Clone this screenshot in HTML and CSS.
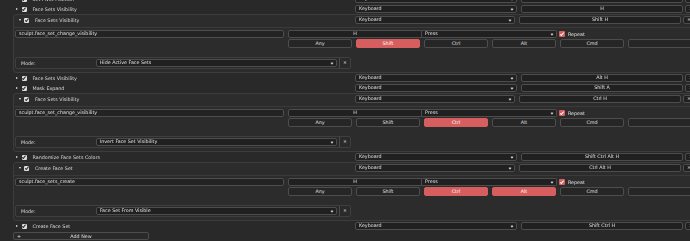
FILE: index.html
```html
<!DOCTYPE html>
<html>
<head>
<meta charset="utf-8">
<link rel="stylesheet" href="styles.css">
</head>
<body>
<div class="page">

  <div class="row">
    <div class="lead"><span class="tri"></span><span class="chk"></span><span class="name">Set Pivot Position</span></div>
    <div class="field dd">Keyboard<span class="arrow"></span></div>
    <div class="field key">Alt O</div>
    <div class="field xb">×</div>
  </div>

  <div class="row">
    <div class="lead"><span class="tri"></span><span class="chk"></span><span class="name">Face Sets Visibility</span></div>
    <div class="field dd">Keyboard<span class="arrow"></span></div>
    <div class="field key">H</div>
    <div class="field xb">×</div>
  </div>

  <div class="box">
    <div class="head">
      <div class="lead"><span class="tri open"></span><span class="chk"></span><span class="name">Face Sets Visibility</span></div>
      <div class="field dd">Keyboard<span class="arrow"></span></div>
      <div class="field key">Shift H</div>
      <div class="field xb">×</div>
    </div>
    <div class="sep"></div>
    <div class="line1">
      <div class="field op">sculpt.face_set_change_visibility</div>
      <div class="field hk">H</div>
      <div class="field press">Press<span class="arrow"></span></div>
      <span class="rchk"></span><span class="rtext">Repeat</span>
    </div>
    <div class="mods">
      <div class="mod">Any</div>
      <div class="mod on">Shift</div>
      <div class="mod">Ctrl</div>
      <div class="mod">Alt</div>
      <div class="mod">Cmd</div>
      <div class="mod"></div>
    </div>
    <div class="mode">
      <div class="mlabel">Mode:</div>
      <div class="field mdd">Hide Active Face Sets<span class="arrow"></span></div>
      <div class="mx">×</div>
    </div>
  </div>

  <div class="row">
    <div class="lead"><span class="tri"></span><span class="chk"></span><span class="name">Face Sets Visibility</span></div>
    <div class="field dd">Keyboard<span class="arrow"></span></div>
    <div class="field key">Alt H</div>
    <div class="field xb">×</div>
  </div>

  <div class="row">
    <div class="lead"><span class="tri"></span><span class="chk"></span><span class="name">Mask Expand</span></div>
    <div class="field dd">Keyboard<span class="arrow"></span></div>
    <div class="field key">Shift A</div>
    <div class="field xb">×</div>
  </div>

  <div class="box">
    <div class="head">
      <div class="lead"><span class="tri open"></span><span class="chk"></span><span class="name">Face Sets Visibility</span></div>
      <div class="field dd">Keyboard<span class="arrow"></span></div>
      <div class="field key">Ctrl H</div>
      <div class="field xb">×</div>
    </div>
    <div class="sep"></div>
    <div class="line1">
      <div class="field op">sculpt.face_set_change_visibility</div>
      <div class="field hk">H</div>
      <div class="field press">Press<span class="arrow"></span></div>
      <span class="rchk"></span><span class="rtext">Repeat</span>
    </div>
    <div class="mods">
      <div class="mod">Any</div>
      <div class="mod">Shift</div>
      <div class="mod on">Ctrl</div>
      <div class="mod">Alt</div>
      <div class="mod">Cmd</div>
      <div class="mod"></div>
    </div>
    <div class="mode">
      <div class="mlabel">Mode:</div>
      <div class="field mdd">Invert Face Set Visibility<span class="arrow"></span></div>
      <div class="mx">×</div>
    </div>
  </div>

  <div class="row">
    <div class="lead"><span class="tri"></span><span class="chk"></span><span class="name">Randomize Face Sets Colors</span></div>
    <div class="field dd">Keyboard<span class="arrow"></span></div>
    <div class="field key">Shift Ctrl Alt H</div>
    <div class="field xb">×</div>
  </div>

  <div class="box">
    <div class="head">
      <div class="lead"><span class="tri open"></span><span class="chk"></span><span class="name">Create Face Set</span></div>
      <div class="field dd">Keyboard<span class="arrow"></span></div>
      <div class="field key">Ctrl Alt H</div>
      <div class="field xb">×</div>
    </div>
    <div class="sep"></div>
    <div class="line1">
      <div class="field op">sculpt.face_sets_create</div>
      <div class="field hk">H</div>
      <div class="field press">Press<span class="arrow"></span></div>
      <span class="rchk"></span><span class="rtext">Repeat</span>
    </div>
    <div class="mods">
      <div class="mod">Any</div>
      <div class="mod">Shift</div>
      <div class="mod on">Ctrl</div>
      <div class="mod on">Alt</div>
      <div class="mod">Cmd</div>
      <div class="mod"></div>
    </div>
    <div class="mode">
      <div class="mlabel">Mode:</div>
      <div class="field mdd">Face Set From Visible<span class="arrow"></span></div>
      <div class="mx">×</div>
    </div>
  </div>

  <div class="row">
    <div class="lead"><span class="tri"></span><span class="chk"></span><span class="name">Create Face Set</span></div>
    <div class="field dd">Keyboard<span class="arrow"></span></div>
    <div class="field key">Shift Ctrl H</div>
    <div class="field xb">×</div>
  </div>

  <div class="addnew"><span class="plus">+</span><span class="addtext">Add New</span></div>

</div>
</body>
</html>
```

FILE: styles.css
```css
* { box-sizing: border-box; margin: 0; padding: 0; }
html, body { background: #292929; }
body {
  width: 690px;
  height: 241px;
  overflow: hidden;
  font-family: "DejaVu Sans", sans-serif;
  font-size: 4.8px;
  color: #dcdcdc;
}
.page { width: 720px; margin-top: -6px; }

.row { display: flex; align-items: center; height: 10px; }
.row .lead { width: 355px; padding-left: 16px; }
.lead { display: flex; align-items: center; height: 10px; }
.tri {
  width: 0; height: 0;
  border-top: 1.5px solid transparent;
  border-bottom: 1.5px solid transparent;
  border-left: 2.5px solid #e6e6e6;
  margin-right: 3.5px;
}
.tri.open {
  border-left: 1.5px solid transparent;
  border-right: 1.5px solid transparent;
  border-top: 2.5px solid #e6e6e6;
  border-bottom: 0;
  margin-right: 3px;
}
.chk {
  width: 5px; height: 5px;
  background: #dcdcdc;
  border-radius: 1px;
  margin-right: 6px;
  position: relative;
}
.chk::after {
  content: "";
  position: absolute;
  left: 1.6px; top: 0.4px;
  width: 1.2px; height: 2.6px;
  border-right: 0.9px solid #2a2a2a;
  border-bottom: 0.9px solid #2a2a2a;
  transform: rotate(40deg);
}
.name { white-space: nowrap; color: #dadada; filter: grayscale(1); }

.field {
  height: 8px;
  line-height: 6px;
  border: 1px solid #4d4d4d;
  border-radius: 2px;
  background: #202020;
  color: #e2e2e2;
  white-space: nowrap;
  position: relative;
  filter: grayscale(1);
}
.dd { width: 162px; padding-left: 3px; margin-right: 4px; }
.arrow {
  position: absolute;
  right: 3px; top: 1.5px;
  width: 2px; height: 2px;
  border-right: 0.7px solid #cfcfcf;
  border-bottom: 0.7px solid #cfcfcf;
  transform: rotate(45deg);
}
.key { width: 162px; text-align: center; margin-right: 2px; }
.xb { width: 12px; text-align: center; }

.box {
  margin-left: 13px;
  height: 59px;
  border: 1px solid #3c3c3c;
  border-radius: 3px;
  background: #2c2c2c;
}
.head { display: flex; align-items: center; height: 10px; margin-bottom: 2px; }
.head .lead { width: 341px; padding-left: 5px; }
.head .tri.open { margin-right: 3px; }
.head .chk { margin-right: 6px; }
.head .dd { width: 160px; }
.sep { height: 1px; background: #3a3a3a; margin-bottom: 2px; }

.line1 { display: flex; align-items: center; height: 8px; padding-left: 1px; }
.op { width: 269px; padding-left: 3px; margin-right: 4px; background: #232323; }
.hk { width: 134px; text-align: center; border-radius: 2px 0 0 2px; }
.press { width: 135px; padding-left: 3px; border-left: 0; border-radius: 0 2px 2px 0; }
.rchk {
  width: 6px; height: 6px;
  margin-left: 2px; margin-right: 3px;
  background: #d95f5f;
  border-radius: 1px;
  position: relative;
}
.rchk::after {
  content: "";
  position: absolute;
  left: 2px; top: 0.6px;
  width: 1.3px; height: 2.8px;
  border-right: 0.9px solid #fff;
  border-bottom: 0.9px solid #fff;
  transform: rotate(40deg);
}
.rtext { color: #e2e2e2; filter: grayscale(1); }

.mods { display: flex; gap: 4px; height: 9px; margin-top: 1px; padding-left: 274px; }
.mod {
  width: 64px; height: 9px;
  line-height: 7px;
  text-align: center;
  border: 1px solid #4d4d4d;
  border-radius: 2px;
  background: #262626;
  color: #e2e2e2;
  flex: none;
}
.mod.on { background: #d75e5e; border-color: #d75e5e; color: #fff; }

.mode {
  display: flex; align-items: center;
  margin: 9px 0 0 1px;
  width: 336px; height: 12px;
  border: 1px solid #3f3f3f;
  border-radius: 2px;
  background: #2a2a2a;
  filter: grayscale(1);
}
.mlabel { width: 80px; padding-left: 5px; }
.mdd { width: 242px; padding-left: 3px; }
.mx {
  width: 11px; height: 10px;
  margin-left: 2px;
  line-height: 10px;
  text-align: center;
  border-left: 1px solid #4a4a4a;
  color: #e0e0e0;
}

.addnew {
  display: flex; align-items: center;
  margin: 1px 0 0 13px;
  width: 136px; height: 8px;
  border: 1px solid #4d4d4d;
  border-radius: 2px;
  background: #2a2a2a;
  color: #e2e2e2;
  filter: grayscale(1);
}
.plus { width: 10px; padding-left: 3px; }
.addtext { flex: 1; text-align: center; padding-right: 10px; }
```
